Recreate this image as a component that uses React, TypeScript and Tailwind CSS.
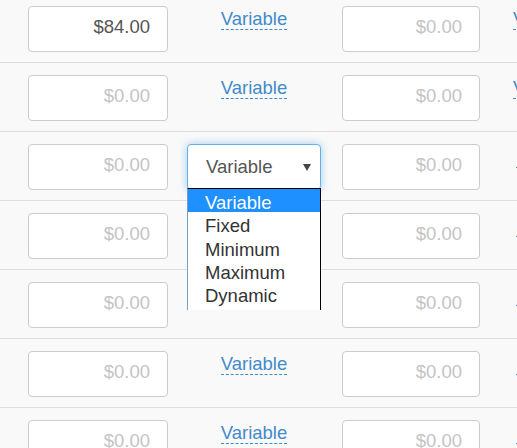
const rows = [
  { amount: "$84.00", select: false, tail: "Variable", tailGap: "ml-[33px]" },
  { amount: "", select: false, tail: "Variable", tailGap: "ml-[33px]" },
  { amount: "", select: true, tail: "Fixed", tailGap: "ml-[36px]" },
  { amount: "", select: false, tail: "Fixed", tailGap: "ml-[36px]", hidden: true },
  { amount: "", select: false, tail: "Fixed", tailGap: "ml-[36px]", hidden: true },
  { amount: "", select: false, tail: "Fixed", tailGap: "ml-[36px]" },
  { amount: "", select: false, tail: "Fixed", tailGap: "ml-[36px]" },
]

const options = ["Variable", "Fixed", "Minimum", "Maximum", "Dynamic"]

const MoneyInput = ({ value, className }: { value: string; className: string }) => (
  <div
    className={`h-[46px] shrink-0 rounded-[4px] border border-[#ccc] bg-white pt-[10px] pr-[17px] text-right text-[18.5px] leading-[20px] ${className} ${
      value ? "text-[#555]" : "text-[#c4c4c4]"
    }`}
  >
    {value || "$0.00"}
  </div>
)

const DashedLink = ({ label, className = "" }: { label: string; className?: string }) => (
  <span
    className={`mt-[3px] inline-block whitespace-nowrap border-b border-dashed border-[#428bca] text-[18.5px] leading-[20px] text-[#428bca] ${className}`}
  >
    {label}
  </span>
)

const OpenSelect = () => (
  <div className="relative h-[46px] w-[134px]">
    <div className="flex h-[46px] items-start justify-between rounded-[4px] border border-[#66afe9] bg-white pt-[12px] pl-[18px] pr-[9px] text-[18.5px] leading-[20px] text-[#555] shadow-[0_0_8px_rgba(102,175,233,0.6)]">
      <span>Variable</span>
      <svg width="8" height="8" viewBox="0 0 8 8" className="mt-[7px]">
        <polygon points="0,0 8,0 4,7" fill="#444" />
      </svg>
    </div>
    <div className="absolute top-[44px] left-0 z-10 w-[134px] border-t border-r border-l border-t-black border-r-black border-l-[#7a9cc9] bg-white pb-[4px]">
      {options.map((o, i) => (
        <div
          key={o}
          className={`h-[23.33px] pt-[4px] pl-[17px] text-[18.5px] leading-[20px] ${
            i === 0 ? "bg-[#1e90ff] text-white" : "text-[#333]"
          }`}
        >
          {o}
        </div>
      ))}
    </div>
  </div>
)

export default function App() {
  return (
    <div className="h-[448px] w-[517px] overflow-hidden bg-[#f9f9f9] font-['Liberation_Sans',Arial,sans-serif]">
      <div className="-mt-[6px]">
        {rows.map((r, i) => (
          <div key={i} className="flex h-[69px] items-start border-b border-[#ddd] pt-3 pl-[28px]">
            <MoneyInput value={r.amount} className="w-[140px]" />
            <div className="ml-[19px] flex w-[134px] shrink-0 justify-center">
              {r.select ? <OpenSelect /> : r.hidden ? null : <DashedLink label="Variable" />}
            </div>
            <MoneyInput value="" className="ml-[21px] w-[138px]" />
            <DashedLink label={r.tail} className={`${r.tailGap} ${r.tail === "Fixed" ? "pl-[4px]" : ""}`} />
          </div>
        ))}
      </div>
    </div>
  )
}
